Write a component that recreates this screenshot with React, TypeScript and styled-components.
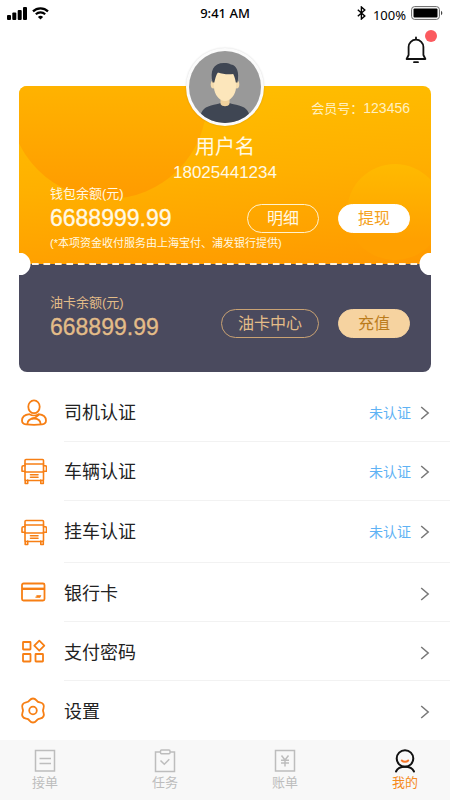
import React from "react";
import styled, { createGlobalStyle, css } from "styled-components";

const GlobalStyle = createGlobalStyle`
  *, *::before, *::after { box-sizing: border-box; }
  body {
    margin: 0;
    background: #fff;
    color: #222;
    font-family: "Liberation Sans", "Noto Sans CJK SC", sans-serif;
  }
  button { font-family: inherit; cursor: pointer; }
  svg { display: block; flex: none; }
`;

const Screen = styled.div`
  min-height: 100vh;
  display: flex;
  flex-direction: column;
  background: #fff;
`;

const StatusBar = styled.div`
  display: grid;
  grid-template-columns: 1fr auto 1fr;
  align-items: center;
  height: 26px;
  padding: 0 7px;
  color: #000;
  font-family: "Noto Sans", sans-serif;
  font-size: 13px;
  line-height: 20px;
`;

const StatusGroup = styled.div<{ $end?: boolean }>`
  display: flex;
  align-items: center;
  gap: 5px;
  justify-content: ${(p) => (p.$end ? "flex-end" : "flex-start")};
`;

const Clock = styled.time`
  font-weight: 500;
`;

const Percent = styled.span`
  margin-left: 2px;
  padding-top: 3px;
`;

const Header = styled.header`
  display: flex;
  justify-content: flex-end;
  height: 60px;
  padding: 3px 12px 0;
`;

const BellButton = styled.button`
  position: relative;
  width: 44px;
  height: 44px;
  padding: 7px 11px 9px;
  border: 0;
  background: none;

  &::after {
    content: "";
    position: absolute;
    top: 1px;
    right: 1px;
    width: 12px;
    height: 12px;
    border-radius: 50%;
    background: #fb5a5f;
  }
`;

const Ticket = styled.section`
  position: relative;
  margin: 0 19px 11px;
`;

const Avatar = styled.div`
  position: absolute;
  z-index: 1;
  top: -38px;
  left: 50%;
  width: 78px;
  height: 78px;
  margin-left: -39px;
  padding: 3px;
  border-radius: 50%;
  background: #fbfbfb;
  box-shadow: 0 0 2px rgba(0, 0, 0, 0.16);
`;

const Wallet = styled.div`
  position: relative;
  isolation: isolate;
  overflow: hidden;
  display: flex;
  flex-direction: column;
  height: 178px;
  padding: 12px 21px 0 31px;
  border-radius: 8px 8px 0 0;
  background: linear-gradient(175deg, #ffc000 0%, #ffb000 50%, #ff9900 100%);
  color: #fff9e4;
`;

const Bubble = styled.span<{ $large?: boolean }>`
  position: absolute;
  z-index: -1;
  border-radius: 50%;
  ${(p) =>
    p.$large
      ? css`
          left: -10px;
          top: -85px;
          width: 198px;
          height: 198px;
          background: linear-gradient(#ffb400 40%, #ff9b00);
        `
      : css`
          right: -12px;
          top: 78px;
          width: 96px;
          height: 96px;
          background: linear-gradient(#ffba00, #ffa000 80%);
        `}
`;

const Member = styled.div`
  align-self: flex-end;
  font-size: 13px;
  line-height: 20px;
  color: #fff0c0;
`;

const MemberId = styled.span`
  font-size: 14px;
`;

const Person = styled.div`
  display: flex;
  flex-direction: column;
  align-items: center;
  padding-right: 10px;
  margin-top: 14px;
`;

const Name = styled.h1`
  margin: 0;
  font-size: 20px;
  font-weight: 400;
  line-height: 28px;
`;

const Phone = styled.div`
  font-size: 17px;
  line-height: 24px;
`;

const Account = styled.div`
  display: flex;
  align-items: flex-end;
  justify-content: space-between;
`;

const Balance = styled.div`
  display: flex;
  flex-direction: column;
`;

const BalanceLabel = styled.span`
  font-size: 13px;
  line-height: 18px;
`;

const Amount = styled.span`
  font-size: 23px;
  line-height: 30px;
  -webkit-text-stroke: 0.3px currentColor;
`;

const Note = styled.div`
  font-size: 11px;
  line-height: 20px;
`;

const Actions = styled.div<{ $raised?: boolean }>`
  display: flex;
  gap: 19px;
  padding-bottom: ${(p) => (p.$raised ? 4 : 0)}px;
`;

type Look = "outline" | "white" | "goldOutline" | "gold";

const looks = {
  outline: css`
    border: 1px solid #fff3cf;
    background: transparent;
    color: #fff9e4;
  `,
  white: css`
    border: 1px solid #fff;
    background: #fff;
    color: #f5a11c;
  `,
  goldOutline: css`
    border: 1px solid #c9a273;
    background: transparent;
    color: #e3bc88;
  `,
  gold: css`
    border: 1px solid #f6d3a0;
    background: #f6d3a0;
    color: #bb7c1c;
  `,
};

const Pill = styled.button<{ $look: Look }>`
  min-width: 72px;
  height: 29px;
  padding: 0 16px;
  border-radius: 15px;
  font-size: 16px;
  line-height: 27px;
  ${(p) => looks[p.$look]}
`;

const OilCard = styled.div`
  height: 108px;
  padding: 30px 21px 0 31px;
  border-radius: 0 0 8px 8px;
  background: #4a4a5e;
  color: #e3bc88;
`;

const Perforation = styled.div`
  position: absolute;
  z-index: 1;
  top: 167px;
  left: 0;
  right: 0;
  height: 22px;
  overflow: hidden;
  background:
    radial-gradient(circle at 0 50%, #fff 11px, transparent 12px),
    radial-gradient(circle at 100% 50%, #fff 11px, transparent 12px);

  &::before {
    content: "";
    display: block;
    height: 2px;
    margin: 10px 9px 0 13px;
    background: linear-gradient(90deg, #fff2dc 62%, transparent 62%) 0 0 / calc(100% / 34) 2px;
  }
`;

const Menu = styled.nav`
  display: flex;
  flex-direction: column;
`;

const MenuGroup = styled.ul`
  margin: 0;
  padding: 0;
  list-style: none;
`;

const MenuRow = styled.a`
  display: flex;
  align-items: center;
  color: #222;
  text-decoration: none;
`;

const RowIcon = styled.span`
  width: 64px;
  padding-left: 20px;
`;

const RowBody = styled.span<{ $tall?: boolean; $plain?: boolean; $low?: boolean }>`
  flex: 1;
  display: flex;
  align-items: center;
  padding: ${(p) => (p.$low ? 4 : 2)}px 20px ${(p) => (p.$tall ? 2 : 0)}px 0;
  height: ${(p) => (p.$tall ? 62 : 59)}px;
  border-bottom: 1px solid ${(p) => (p.$plain ? "transparent" : "#f2f2f2")};
`;

const RowTitle = styled.span`
  flex: 1;
  font-size: 18px;
  line-height: 26px;
`;

const RowState = styled.span`
  margin-right: 9px;
  font-size: 14px;
  line-height: 20px;
  color: #5fb2f4;
`;

const TabBar = styled.nav`
  display: flex;
  justify-content: space-between;
  height: 61px;
  margin-top: auto;
  padding: 9px 15px 0;
  background: #f8f8f8;
`;

const Tab = styled.a<{ $active?: boolean }>`
  display: flex;
  flex-direction: column;
  align-items: center;
  width: 60px;
  font-size: 13px;
  line-height: 20px;
  text-decoration: none;
  color: ${(p) => (p.$active ? "#f58a1c" : "#bdbdbd")};
`;

const SignalIcon = () => (
  <svg width="20" height="13" viewBox="0 0 20 13" fill="#000">
    <rect x="0" y="8" width="4" height="5" rx="1" />
    <rect x="5.3" y="5.5" width="4" height="7.5" rx="1" />
    <rect x="10.7" y="3" width="4" height="10" rx="1" />
    <rect x="16" y="0" width="4" height="13" rx="1" />
  </svg>
);

const WifiIcon = () => (
  <svg width="17" height="13" viewBox="0 0 17 13" fill="none" stroke="#000">
    <path d="M1 4.4a10.6 10.6 0 0 1 15 0" strokeWidth="2.2" />
    <path d="M3.8 7.3a6.7 6.7 0 0 1 9.4 0" strokeWidth="2.1" />
    <path d="M8.5 12.6L5.9 9.9a3.8 3.8 0 0 1 5.2 0z" fill="#000" stroke="none" />
  </svg>
);

const BluetoothIcon = () => (
  <svg width="9" height="14" viewBox="0 0 9 14" fill="none" stroke="#000" strokeWidth="1.4">
    <path d="M.8 3.8l7 6.2-3.4 3V1l3.4 3-7 6.2" />
  </svg>
);

const BatteryIcon = () => (
  <svg width="32" height="14" viewBox="0 0 32 14">
    <rect x=".6" y=".6" width="27.8" height="12.8" rx="3" fill="none" stroke="#666" />
    <rect x="2.5" y="2.5" width="24" height="9" rx="1" fill="#000" />
    <path d="M30 4.8c1.8.8 1.8 3.6 0 4.4z" fill="#444" />
  </svg>
);

const BellIcon = () => (
  <svg width="22" height="28" viewBox="0 0 22 28" fill="none" stroke="#111" strokeWidth="1.8" strokeLinecap="round">
    <path d="M3.6 19V11a7.4 7.4 0 0 1 14.8 0v8l2 4H1.6z" strokeLinejoin="round" />
    <path d="M11 1.4v1.8M9 26.2h4" />
  </svg>
);

const Portrait = () => (
  <svg width="72" height="72" viewBox="0 0 72 72" role="img" aria-label="头像">
    <defs>
      <clipPath id="portrait">
        <circle cx="36" cy="36" r="36" />
      </clipPath>
    </defs>
    <g clipPath="url(#portrait)">
      <rect width="72" height="72" fill="#999" />
      <path d="M11 72c0-12 3-15 11-17.5 4-1.2 7-1.2 9.5-2.5h9c2.5 1.3 5.5 1.3 9.5 2.5 8 2.5 11 5.5 11 17.5z" fill="#3f4653" />
      <path d="M31.5 45h9v8c-1.5 3-7.5 3-9 0z" fill="#efd19d" />
      <ellipse cx="24.5" cy="33.5" rx="2.8" ry="4" fill="#f5dcae" />
      <ellipse cx="47.5" cy="33.5" rx="2.8" ry="4" fill="#f5dcae" />
      <path d="M25 22h22v14c0 8-6 14-11 14s-11-6-11-14z" fill="#fce6bb" />
      <path d="M23.5 31.5C21 20 24 12 35 12c3 0 5 .3 7 1.5 6 .8 8.500 8 6.500 18h-1.700c-.6-3.500-1.200-6-2.600-8.500-5 .6-11 .2-15.200-1.800-2 3-2.800 6.300-3.700 10.300z" fill="#3f4653" />
    </g>
  </svg>
);

const iconProps = {
  width: 27,
  height: 27,
  viewBox: "0 0 27 27",
  fill: "none",
  stroke: "#f77f14",
  strokeWidth: 1.8,
  strokeLinejoin: "round" as const,
  strokeLinecap: "round" as const,
};

const DriverIcon = () => (
  <svg {...iconProps}>
    <ellipse cx="14" cy="7.8" rx="5.7" ry="6.4" />
    <path d="M9.5 15.2C5 15.8 2 17.8 2 21.5c0 2.8 1.5 3.6 4 3.9 5 .6 11 .6 16 0 2.5-.3 4-1.1 4-3.9 0-3.7-3-5.7-7.5-6.3-2.5 1.6-6.5 1.6-9 0z" />
    <path d="M7.3 25.2c.3-4.2 3.2-5.7 6.7-5.7s6.4 1.5 6.7 5.7" />
    <path d="M12 19.5c2-.3 4.5-1.2 6.5-3.3" />
  </svg>
);

const TruckIcon = () => (
  <svg {...iconProps} strokeWidth={1.6}>
    <rect x="5" y="1.5" width="18.5" height="21" rx="1" />
    <path d="M5 6h18.5M5 14h18.5M5 7.8H3.2c-.6 0-1.2.5-1.2 1.2v4.2h3M23.5 7.8h1.8c.6 0 1.2.5 1.2 1.2v4.2h-3M10.5 16.8h7.5M10.5 19.2h7.5" />
    <path d="M5.2 22v3.5h2.5V22M20.8 22v3.5h2.5V22" />
  </svg>
);

const BankCardIcon = () => (
  <svg {...iconProps}>
    <rect x="2" y="4.5" width="22.5" height="17" rx="1.5" />
    <path d="M2 9.8h22.5" strokeWidth="2.4" strokeLinecap="butt" />
    <path d="M17 16.5h4l-1 2h-4z" fill="#f77f14" strokeWidth=".6" />
  </svg>
);

const PasswordIcon = () => (
  <svg {...iconProps}>
    <rect x="3" y="4" width="7.5" height="7.5" rx=".5" />
    <rect x="3" y="16" width="7.5" height="7.5" rx=".5" />
    <rect x="15.5" y="16" width="7.5" height="7.5" rx=".5" />
    <path d="M19.3 2.6l5 5-5 5-5-5z" />
  </svg>
);

const SettingsIcon = () => (
  <svg {...iconProps}>
    <circle cx="13" cy="13.5" r="3.8" />
    <path d="M13 1.500C15.900 1.500 16.300 3.900 18 4.840 19.700 5.800 22 4.900 23.400 7.500 24.800 10.100 23 11.600 23 13.500 23 15.400 24.800 16.900 23.400 19.500 22 22.100 19.700 21.200 18 22.160 16.300 23.100 15.900 25.500 13 25.500 10.100 25.500 9.700 23.100 8 22.160 6.300 21.200 4 22.100 2.600 19.500 1.200 16.900 3 15.400 3 13.500 3 11.600 1.200 10.100 2.600 7.500 4 4.900 6.300 5.800 8 4.840 9.700 3.900 10.100 1.500 13 1.500z" />
  </svg>
);

const Chevron = () => (
  <svg width="10" height="14" viewBox="0 0 10 14" fill="none" stroke="#777" strokeWidth="1.5">
    <path d="M1.2 1l7 6-7 6" />
  </svg>
);

const tabIconProps = {
  width: 22,
  height: 24,
  viewBox: "0 0 22 24",
  fill: "none",
  stroke: "currentColor",
  strokeWidth: 1.5,
};

const OrdersIcon = () => (
  <svg {...tabIconProps}>
    <rect x="1.5" y="1.5" width="19" height="20.5" />
    <path d="M5.5 9.5h11.5M5.5 14.5h11.5" />
  </svg>
);

const TasksIcon = () => (
  <svg {...tabIconProps}>
    <path d="M6 3H1.5v19.5h19V3H16" />
    <rect x="6.5" y="1" width="9.5" height="3.8" rx="1" />
    <path d="M6.5 11.5l3.8 3.8 5-5" />
  </svg>
);

const BillsIcon = () => (
  <svg {...tabIconProps}>
    <rect x="1.5" y="1.5" width="19" height="20.5" />
    <path d="M7.5 6.5l3.5 4.5 3.5-4.5M7 11.3h8M7 14h8M11 11v6.5" />
  </svg>
);

const MineIcon = () => (
  <svg {...tabIconProps} stroke="#111" strokeWidth={2} strokeLinecap="round">
    <circle cx="11" cy="9.5" r="8.3" />
    <path d="M2 22.5c1.5-3.3 5-4.8 9-4.8s7.5 1.5 9 4.8" />
    <path d="M7.8 11.5c1.6 1.7 4.8 1.7 6.4 0" stroke="#f5762a" />
  </svg>
);

interface Item {
  title: string;
  icon: React.ReactNode;
  state?: string;
}

const certifications: Item[] = [
  { title: "司机认证", icon: <DriverIcon />, state: "未认证" },
  { title: "车辆认证", icon: <TruckIcon />, state: "未认证" },
  { title: "挂车认证", icon: <TruckIcon />, state: "未认证" },
];

const preferences: Item[] = [
  { title: "银行卡", icon: <BankCardIcon /> },
  { title: "支付密码", icon: <PasswordIcon /> },
  { title: "设置", icon: <SettingsIcon /> },
];

const tabs = [
  { label: "接单", icon: <OrdersIcon /> },
  { label: "任务", icon: <TasksIcon /> },
  { label: "账单", icon: <BillsIcon /> },
  { label: "我的", icon: <MineIcon />, active: true },
];

const MenuList = ({ items, last }: { items: Item[]; last?: boolean }) => (
  <MenuGroup>
    {items.map((item, i) => {
      const isEnd = i === items.length - 1;
      return (
        <li key={item.title}>
          <MenuRow href="#">
            <RowIcon>{item.icon}</RowIcon>
            <RowBody $tall={isEnd && !last} $plain={isEnd && last} $low={last}>
              <RowTitle>{item.title}</RowTitle>
              {item.state && <RowState>{item.state}</RowState>}
              <Chevron />
            </RowBody>
          </MenuRow>
        </li>
      );
    })}
  </MenuGroup>
);

export default function App() {
  return (
    <Screen>
      <GlobalStyle />
      <StatusBar>
        <StatusGroup>
          <SignalIcon />
          <WifiIcon />
        </StatusGroup>
        <Clock>9:41 AM</Clock>
        <StatusGroup $end>
          <BluetoothIcon />
          <Percent>100%</Percent>
          <BatteryIcon />
        </StatusGroup>
      </StatusBar>
      <Header>
        <BellButton aria-label="消息">
          <BellIcon />
        </BellButton>
      </Header>
      <Ticket>
        <Avatar>
          <Portrait />
        </Avatar>
        <Wallet>
          <Bubble $large />
          <Bubble />
          <Member>
            会员号：<MemberId>123456</MemberId>
          </Member>
          <Person>
            <Name>用户名</Name>
            <Phone>18025441234</Phone>
          </Person>
          <Account>
            <Balance>
              <BalanceLabel>钱包余额(元)</BalanceLabel>
              <Amount>6688999.99</Amount>
            </Balance>
            <Actions>
              <Pill $look="outline">明细</Pill>
              <Pill $look="white">提现</Pill>
            </Actions>
          </Account>
          <Note>(*本项资金收付服务由上海宝付、浦发银行提供)</Note>
        </Wallet>
        <Perforation />
        <OilCard>
          <Account>
            <Balance>
              <BalanceLabel>油卡余额(元)</BalanceLabel>
              <Amount>668899.99</Amount>
            </Balance>
            <Actions $raised>
              <Pill $look="goldOutline">油卡中心</Pill>
              <Pill $look="gold">充值</Pill>
            </Actions>
          </Account>
        </OilCard>
      </Ticket>
      <Menu>
        <MenuList items={certifications} />
        <MenuList items={preferences} last />
      </Menu>
      <TabBar>
        {tabs.map((tab) => (
          <Tab key={tab.label} href="#" $active={tab.active}>
            {tab.icon}
            {tab.label}
          </Tab>
        ))}
      </TabBar>
    </Screen>
  );
}
